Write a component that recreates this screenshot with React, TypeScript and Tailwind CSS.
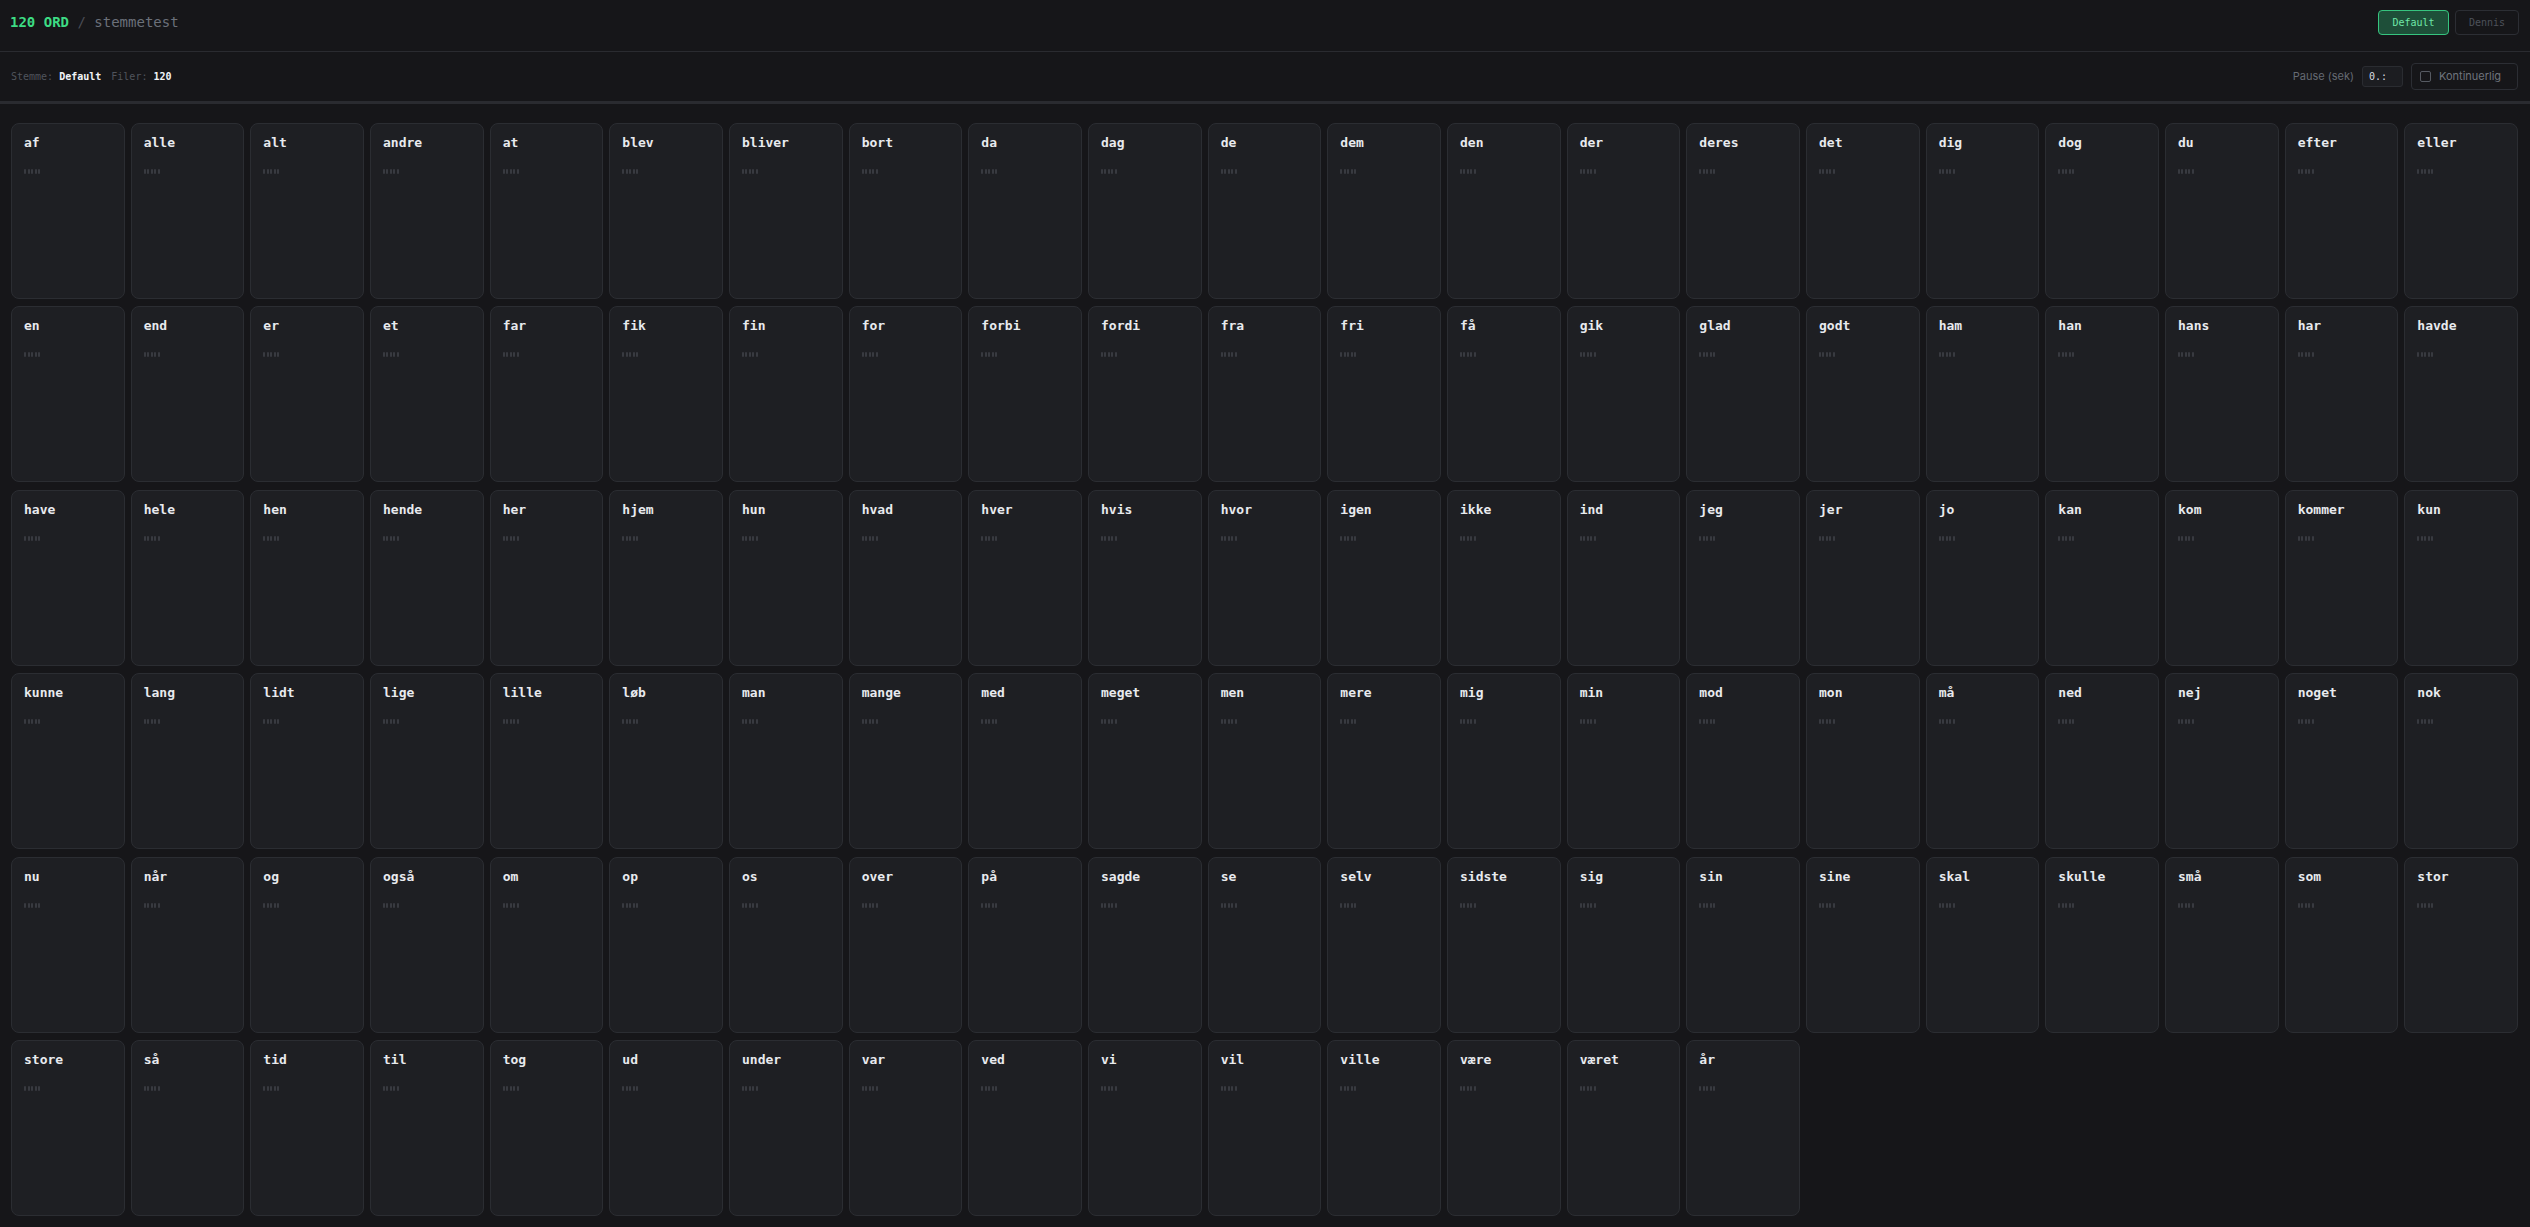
import { memo } from 'react';

const WORDS = [
    'af', 'alle', 'alt', 'andre', 'at', 'blev', 'bliver', 'bort', 'da', 'dag', 'de', 'dem', 'den', 'der', 'deres', 'det', 'dig', 'dog', 'du', 'efter', 'eller',
    'en', 'end', 'er', 'et', 'far', 'fik', 'fin', 'for', 'forbi', 'fordi', 'fra', 'fri', 'få', 'gik', 'glad', 'godt', 'ham', 'han', 'hans', 'har', 'havde',
    'have', 'hele', 'hen', 'hende', 'her', 'hjem', 'hun', 'hvad', 'hver', 'hvis', 'hvor', 'igen', 'ikke', 'ind', 'jeg', 'jer', 'jo', 'kan', 'kom', 'kommer', 'kun',
    'kunne', 'lang', 'lidt', 'lige', 'lille', 'løb', 'man', 'mange', 'med', 'meget', 'men', 'mere', 'mig', 'min', 'mod', 'mon', 'må', 'ned', 'nej', 'noget', 'nok',
    'nu', 'når', 'og', 'også', 'om', 'op', 'os', 'over', 'på', 'sagde', 'se', 'selv', 'sidste', 'sig', 'sin', 'sine', 'skal', 'skulle', 'små', 'som', 'stor',
    'store', 'så', 'tid', 'til', 'tog', 'ud', 'under', 'var', 'ved', 'vi', 'vil', 'ville', 'være', 'været', 'år',
];

const mono = "font-['DejaVu_Sans_Mono','Liberation_Mono',monospace]";
const sans = "font-['Inter','Noto_Sans',sans-serif]";

const WordCard = memo(function WordCard({ word }: { word: string }) {
    return (
        <div className="h-[176px] rounded-lg border border-[#2b2d32] bg-[#1e1f23] px-3 pt-[11px]">
            <div className={`${mono} text-[13px] font-bold leading-4 text-[#e8eaee]`}>{word}</div>
            {/* placeholder waveform */}
            <div className="mt-[18px] flex gap-[1.5px]">
                <span className="h-[5px] w-[2px] rounded-[1px] bg-[#383a40]" />
                <span className="h-[5px] w-[2px] rounded-[1px] bg-[#383a40]" />
                <span className="h-[5px] w-[2px] rounded-[1px] bg-[#383a40]" />
                <span className="h-[5px] w-[2px] rounded-[1px] bg-[#383a40]" />
                <span className="h-[5px] w-[2px] rounded-[1px] bg-[#383a40]" />
            </div>
        </div>
    );
});

export default function App() {
    return (
        <div className="min-h-screen bg-[#161619] text-white">
            {/* top bar */}
            <header className="flex h-[52px] items-start justify-between border-b border-[#2a2b30] pl-[10px] pr-[11px] pt-[10px]">
                <div className={`${mono} text-[14px] leading-[25px]`}>
                    <span className="font-semibold text-[#3ddc84]">120 ORD</span>
                    <span className="text-[#4a4d55]"> / </span>
                    <span className="text-[#6b7079]">stemmetest</span>
                </div>
                <div className="flex gap-[6px]">
                    <button className={`${mono} h-[25px] w-[71px] rounded-[4px] border border-[#36c47f] bg-[#1e4f39] text-[10px] text-[#6ee7a8]`}>
                        Default
                    </button>
                    <button className={`${mono} h-[25px] w-[64px] rounded-[4px] border border-[#2c2e34] text-[10px] text-[#4d5159]`}>
                        Dennis
                    </button>
                </div>
            </header>

            {/* info bar */}
            <div className="flex h-[52px] items-center justify-between border-b-[3px] border-[#2a2b30] pl-[11px] pr-[12px]">
                <div className={`${mono} flex items-center text-[10px]`}>
                    <span className="text-[#50545c]">Stemme:</span>
                    <span className="ml-[6px] font-bold text-[#f1f3f6]">Default</span>
                    <span className="ml-[10px] text-[#50545c]">Filer:</span>
                    <span className="ml-[6px] font-bold text-[#f1f3f6]">120</span>
                </div>
                <div className="flex items-center">
                    <span className={`${sans} text-[11px] text-[#656a73]`}>Pause (sek)</span>
                    <input
                        readOnly
                        value="0.:"
                        className={`${mono} ml-[8px] h-[21px] w-[41px] rounded-[3px] border border-[#2a2c31] bg-[#1c1d21] px-[6px] text-[10px] text-[#d8dbe0] outline-none`}
                    />
                    <label className="ml-[8px] flex h-[27px] w-[107px] items-center gap-[8px] rounded-[4px] border border-[#2c2e34] px-[8px]">
                        <span className="h-[11px] w-[11px] rounded-[2px] border border-[#565a62]" />
                        <span className={`${sans} text-[11px] text-[#6f747d]`}>Kontinuerlig</span>
                    </label>
                </div>
            </div>

            {/* word grid */}
            <main className="grid grid-cols-[repeat(21,minmax(0,1fr))] gap-x-[6px] gap-y-[7.4px] pb-[11px] pl-[11px] pr-[12px] pt-[19px]">
                {WORDS.map((word) => (
                    <WordCard key={word} word={word} />
                ))}
            </main>
        </div>
    );
}
